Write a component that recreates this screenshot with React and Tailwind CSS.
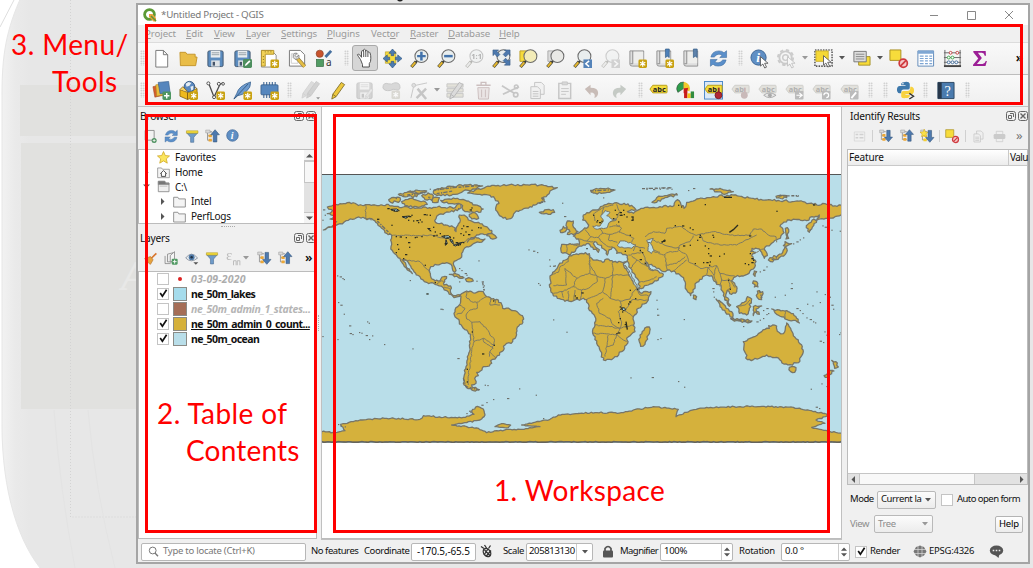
import React from "react";

/* ---------- shared icon parts ---------- */
const Star = ({ x = 11, y = 11 }) => (
  <g transform={`translate(${x} ${y})`}>
    <rect width="9" height="9" rx="1.5" fill="#c9a211" />
    <path d="M4.5 1.4v6.2M1.8 2.900l5.400 3.200M7.200 2.900 1.800 6.100" stroke="#fff" strokeWidth="1.3" />
  </g>
);
const Lens = ({ fill = "#e9eeee", s = "#6b6b6b", h = "#e8b92f" }) => (
  <g>
    <path d="M1.5 19 6.5 13.2" stroke="#4a4a3a" strokeWidth="3.4" />
    <path d="M1.8 18.6 5.6 14.2" stroke={h} strokeWidth="2" />
    <path d="m6.5 13.5 2-2.3" stroke="#333" strokeWidth="2" />
    <circle cx="12" cy="7.5" r="6.8" fill={fill} stroke={s} strokeWidth="1.1" />
  </g>
);
const Arrow = ({ x = 10, y = 7 }) => (
  <path transform={`translate(${x} ${y})`} d="M0 0v10l2.5-2.2 2 4.2 1.9-.9-2-4.1H8Z" fill="#fff" stroke="#555" strokeWidth=".9" />
);
const Floppy = () => (
  <g>
    <rect x="2" y="2" width="16" height="16.5" rx="1.5" fill="#5b8cbf" stroke="#41566e" />
    <path d="M5 2h10v7H5z" fill="#e9edf0" />
    <path d="M6 4h8M6 6h8" stroke="#8c979f" strokeWidth=".9" />
    <path d="M5.5 12h9v6.5h-9z" fill="#dfe3e6" />
    <path d="M7 13.5h2.5v4H7z" fill="#46556a" />
  </g>
);
const Tag = ({ t = "abc", fill = "#f5dd3c", s = "#b79d17", c = "#222" }) => (
  <g>
    <path d="M1 8.5 4 4.5h14.2q.8 0 .8.8v6.4q0 .8-.8.8H4Z" fill={fill} stroke={s} />
    <text x={t === "ab" ? 4 : 4} y="11.2" fontSize="7.8" fontWeight="700" fontFamily="Noto Sans, sans-serif" fill={c}>{t}</text>
  </g>
);
const GreyTag = ({ children, t }) => (
  <g><Tag t={t} fill="#e2e1dc" s="#cfcfca" c="#b0b0b0" />{children}</g>
);
const Book = () => (
  <g>
    <path d="M2 2h14.5v16H4.5Q2 18 2 16Z" fill="#dedede" stroke="#909090" />
    <path d="M5 2v13.5H2.5" fill="none" stroke="#8b8b8b" />
    <path d="M6 3h10v12H6z" fill="#eeeeec" />
  </g>
);
const TreeArrow = ({ up, star }) => (
  <g>
    <path d="M3.500 3v13M4 4h6M4 9.500h5M4 15.500h6" stroke="#9b9b9b" strokeWidth="1.400" fill="none" />
    <path d="M1 1.500h6v4H1z" fill="#d9d9d9" stroke="#999" strokeWidth=".7" />
    <path d="M5 7.500h4.500v4H5zM5 13.500h4.500v4H5z" fill={star ? "#f5cf2e" : "#eda836"} />
    {star && <path d="M6 0 7.500 4 12 4.500 8.500 7l1 4.500L6 9l-4 2 1-4L0 4.500 4.500 4Z" fill="#fae04b" stroke="#c79e15" strokeWidth=".6" />}
    {up
      ? <path d="M14 1 20 8H16.500V18H11.500V8H8Z" fill="#4d79ae" stroke="#345479" strokeWidth=".8" />
      : <path d="M14 19 20 12H16.500V2H11.500V12H8Z" fill="#4d79ae" stroke="#345479" strokeWidth=".8" />}
  </g>
);
const Refresh = () => (
  <g fill="#5a8fca" stroke="#3e6c9f" strokeWidth=".6">
    <path d="M2 8.500Q3.500 2 10.500 2q3.500 0 5.300 2L18.500 1.800V9h-7.200l2.500-2.300Q9.500 3.500 5.500 8.500Z" />
    <path d="M18 11.500Q16.500 18 9.500 18q-3.500 0-5.300-2l-2.700 2.200V11h7.200l-2.500 2.300Q10.500 16.500 14.500 11.500Z" />
  </g>
);
const Funnel = () => (
  <g>
    <path d="M2.500 5.500h15l-5.300 6v7H7.800v-7Z" fill="#6f9bc9" stroke="#46698f" strokeWidth=".8" />
    <path d="M2 2.500h16v3.300H2z" fill="#f3dc3c" stroke="#b29922" strokeWidth=".8" />
  </g>
);
const Info = () => (
  <g>
    <circle cx="9" cy="9" r="8" fill="#5f8fc4" stroke="#3c6596" />
    <text x="6.600" y="14" fontSize="14" fontStyle="italic" fontWeight="700" fontFamily="Liberation Serif, serif" fill="#fff">i</text>
  </g>
);
const Ban = () => (
  <g><circle cx="15" cy="15" r="4.300" fill="#f6caca" stroke="#cf3a3f" strokeWidth="1.800" /><path d="m12 18 6-6" stroke="#cf3a3f" strokeWidth="1.800" /></g>
);
const Pencil = ({ fill = "#edc83d", s = "#7b6b28" }) => (
  <path d="M4 19 5 14 14 1.500l3.500 2.300L8.500 16.500ZM5 14l3.500 2.500" fill={fill} stroke={s} strokeWidth=".9" />
);

const ICONS = {
  newfile: <path d="M4 1.500h8l4.500 4.500v13H4ZM12 1.500V6h4.500" fill="#fff" stroke="#777" />,
  open: <path d="M1 3.500h6l1.500 2H17v3h2l-1.500 9H1.500Z" fill="#e9bd48" stroke="#c4962c" />,
  save: <Floppy />,
  saveas: <g><Floppy /><rect x="10.500" y="10.500" width="9.500" height="9.500" rx="1.500" fill="#4c8e5d" /><path d="m12.500 18 .6-2.200 4-4 1.300 1.400-4 4Z" fill="#fff" /></g>,
  layout: <g><path d="M1.500 1.500h10.500l5 5V19H1.500Z" fill="#fff" stroke="#888" /><path d="M1.500 1.500h13v4h-9V18h-4Z" fill="#f2d256" stroke="#b3922a" /><path d="M5 3h1M8 3h1M11 3h1M3 8h1M3 11h1M3 14h1" stroke="#7b641b" /><Star /></g>,
  layoutmgr: <g><path d="M1.500 1.500h11.500l4.500 4.500V18h-16Z" fill="#fff" stroke="#777" /><path d="M3.500 5h7v10h-7z" fill="none" stroke="#ccc" /><path d="m9 9 8.500 9.500" stroke="#8c7434" strokeWidth="4" /><path d="m9 9 8.500 9.500" stroke="#e4bd45" strokeWidth="2.800" /><path d="M5.500 6q1-2.500 4-1.500L7.500 7 9 8.500l2.500-2q1 3-1.500 4Q7 12 5.500 9Z" fill="#dcdcdc" stroke="#777" strokeWidth=".8" /></g>,
  style: <g><circle cx="5" cy="5" r="3.800" fill="#c8532c" stroke="#8a4026" strokeWidth=".7" /><path d="M11 8.500 17 2" stroke="#456f9e" strokeWidth="3" /><rect x="1.500" y="11" width="7.500" height="7.500" fill="#519b63" stroke="#366c44" strokeWidth=".7" /><text x="11.500" y="18" fontSize="10.500" fontFamily="Noto Sans, sans-serif" fill="#333">a</text></g>,
  hand: <path d="M5.500 11.500 3.300 8.300Q1.600 6.500 3.200 6q1.300 0 3.300 3.300V3.500q.2-2 2 0V2q.9-2 2.100 0v1.200q1.200-1.700 2.200.2v1q1.300-1.400 2.200.4 1 3 .8 5.600Q16 14 14.300 15.500V19H7.500v-2.500ZM8.700 3.500V9M10.800 3V9M12.900 4.500V9" fill="#fff" stroke="#444" strokeWidth=".9" />,
  panmap: <g><path d="M2.500 3h11v12h-11z" fill="#f6dc3d" stroke="#b79d25" strokeWidth=".7" /><path d="m10 0 3.800 4.500h-2.400V7H8.600V4.500H6.200ZM10 20l3.800-4.500h-2.400V13H8.600v2.500H6.200ZM0 10l4.500-3.800v2.400H7v2.800H4.500v2.400ZM20 10l-4.500-3.800v2.400H13v2.800h2.500v2.400Z" fill="#4b7cb3" stroke="#345880" strokeWidth=".7" /></g>,
  zoomin: <g><Lens /><path d="M12 3v9M7.500 7.500h9" stroke="#4373ab" strokeWidth="2.600" /></g>,
  zoomout: <g><Lens /><path d="M7.500 7.500h9" stroke="#4373ab" strokeWidth="2.600" /></g>,
  zoom11: <g opacity=".35"><Lens h="#ddd" /><text x="6.500" y="10.500" fontSize="8" fontWeight="700" fontFamily="Noto Sans, sans-serif" fill="#333">1:1</text></g>,
  zoomfull: <g><Lens /><path d="M1 1h6L5.300 2.700l3 3-2.600 2.600-3-3L1 7ZM19 1v6l-1.700-1.700-3 3-2.600-2.600 3-3L13 1ZM19 17h-6l1.700-1.700-3-3 2.600-2.600 3 3L19 11Z" fill="#4d79ae" stroke="#37597f" strokeWidth=".6" /></g>,
  zoomsel: <g><path d="M1 2h9v11H1z" fill="#f7dc3b" stroke="#bca02b" /><Lens fill="#f3ecb8" /></g>,
  zoomlayer: <g><path d="M2 2h9v11H2z" fill="#ddd" stroke="#aaa" /><Lens fill="#e9e9e6" /></g>,
  zoomlast: <g><Lens /><rect x="11" y="11" width="9" height="9" fill="#5483b9" /><path d="m17 12.500-3.500 3 3.500 3" fill="none" stroke="#fff" strokeWidth="1.600" /></g>,
  zoomnext: <g opacity=".3"><Lens h="#ddd" /><rect x="11" y="11" width="9" height="9" fill="#888" /><path d="m14 12.500 3.500 3-3.500 3" fill="none" stroke="#fff" strokeWidth="1.600" /></g>,
  book: <g><Book /><Star /></g>,
  bookmark: <g><Book /><path d="M11 0h4v9l-2-1.500L11 9Z" fill="#4d80b8" stroke="#315a87" strokeWidth=".7" /><Star /></g>,
  bookshow: <g><Book /><path d="M12 0h4v9l-2-1.500L12 9Z" fill="#5e82aa" stroke="#315a87" strokeWidth=".7" /></g>,
  refresh: <Refresh />,
  identify: <g><Info /><Arrow x={11} y={8} /></g>,
  gear: <g opacity=".32"><circle cx="9" cy="9" r="6.500" fill="none" stroke="#777" strokeWidth="2" /><circle cx="9" cy="9" r="8" fill="none" stroke="#777" strokeWidth="2" strokeDasharray="3.500 2.800" /><circle cx="9" cy="9" r="3" fill="none" stroke="#777" strokeWidth="1.500" /><Arrow x={11} y={8} /></g>,
  select: <g><path d="M1 1h18v17H1z" fill="none" stroke="#222" strokeWidth="1.200" strokeDasharray="1.600 1.200" /><path d="M2 2h13v11H2z" fill="#f5d836" stroke="#c2a51f" strokeWidth=".8" /><Arrow x={10} y={7} /></g>,
  selectval: <g><path d="M7 8h12v9H7z" fill="#f7db37" stroke="#a5912d" /><path d="M2 2.500h13v11H2z" fill="#ddd" stroke="#777" /><path d="M4 5.500h9M4 8h9M4 10.500h9" stroke="#888" /></g>,
  deselect: <g><path d="M1 1h11.500v11H1z" fill="#f7dc3b" stroke="#a98f24" /><Ban /></g>,
  table: <g><path d="M2 2h16.500v16H2z" fill="#fff" stroke="#5e88b7" /><path d="M2 2h16.500v3H2z" fill="#7fa7d3" /><path d="M4 7.500h4M9.500 7.500h3M14 7.500h3M4 10h4M9.500 10h3M14 10h3M4 12.500h4M9.500 12.500h3M14 12.500h3M4 15.500h4M9.500 15.500h3M14 15.500h3" stroke="#7ca5d4" strokeWidth="1.300" /></g>,
  abacus: <g><path d="M2 1v17M18 1v17M1 4h18M1 9h18M1 14h18" stroke="#666" fill="none" /><path d="M1 18h18" stroke="#444" strokeWidth="2" /><g stroke="#c64343" fill="#fff"><circle cx="8" cy="4" r="1.500" /><circle cx="15" cy="4" r="1.500" /></g><g stroke="#3fa44b" fill="#fff"><circle cx="6" cy="9" r="1.500" /><circle cx="10" cy="9" r="1.500" /></g><g stroke="#47719f" fill="#fff"><circle cx="6" cy="14" r="1.500" /><circle cx="10" cy="14" r="1.500" /><circle cx="14" cy="14" r="1.500" /></g></g>,
  sigma: <path d="M3.500 2h13l.3 5h-1.300q-.6-3-3-3H8.300l4.200 5.500-5.200 6.300h5.900q2.300 0 3.400-3.300h1.200L16.300 18H3.200v-1.300l5.500-6.700-5.200-6.700Z" fill="#9c1f96" />,
  datasrc: <g><path d="m1 6 8-2 3 11-9 2Z" fill="#d55f2c" stroke="#a04522" strokeWidth=".6" /><path d="m4 4 8-1 2 11-9 2Z" fill="#e9bd3d" stroke="#ad8424" strokeWidth=".6" /><path d="m6.500 1.500 11-1L19 12 8.500 13.500Z" fill="#5686bd" stroke="#38608f" strokeWidth=".7" /><rect x="11" y="11" width="9" height="9" rx="1.500" fill="#4d9660" /><path d="M15.500 12.700v5.600M12.700 15.500h5.600" stroke="#fff" strokeWidth="1.500" /></g>,
  geopkg: <g><path d="m1 9 8 3 10-4v7L9 19.500 1 16Z" fill="#eeb91c" stroke="#7d5d10" strokeWidth=".8" /><path d="M9 12v7.500" stroke="#7d5d10" /><circle cx="11" cy="6" r="5.600" fill="#5a88be" stroke="#345783" /><path d="m7 3 3-2 3 1-2 3-3 1ZM12 6l3-1v4l-2 1Z" fill="#e6edf3" /><path d="m1 9 3-3 5 5M19 8l-3-2" stroke="#7d5d10" fill="#f6d466" strokeWidth=".8" /><Star /></g>,
  vector: <g fill="none" stroke="#4c4c4c"><path d="M3 3 8.500 17 14 5q2-3.500 4-2.500" strokeWidth="1.400" /><g fill="#fff"><circle cx="2.500" cy="2.500" r="1.600" /><circle cx="8.500" cy="17" r="1.600" /><circle cx="13.500" cy="3" r="1.600" /><circle cx="18" cy="3" r="1.400" /></g><g stroke="none"><Star /></g></g>,
  feather: <g><path d="M1 19 4 13Q6 5 18.500 1 19 7 14 11l-4 3-5 1.500Z" fill="#6d9bcf" stroke="#365f8c" strokeWidth=".8" /><path d="M1 19 16 3" stroke="#31577e" strokeWidth=".9" /><Star /></g>,
  chip: <g><path d="M4 1v17M7 1v17M10 1v17M13 1v17M16 1v17" stroke="#54779f" strokeWidth="1.300" /><rect x="1" y="4" width="18" height="10.500" rx="1" fill="#5687be" stroke="#345985" strokeWidth=".8" /><Star /></g>,
  pencils: <g opacity=".6"><g transform="translate(-3 -1)"><Pencil fill="#ccc" s="#bbb" /></g><g transform="translate(2 -1)"><Pencil fill="#bbb" s="#aaa" /></g><path d="M16 17h4l-2 2.500Z" fill="#555" /></g>,
  pencil: <Pencil />,
  saveedit: <g opacity=".28" style={{ filter: "grayscale(1)" }}><Floppy /><g transform="translate(8 7) scale(.62)"><Pencil /></g></g>,
  addpoly: <g opacity=".6"><path d="M1 7Q1 1 7 3q3 1 6-1 6-1 6 5-1 4-5 2-2-1-5 1-7 1-8-3Z" fill="#c5c5c5" stroke="#aaa" /><rect x="10" y="10" width="9" height="9" rx="1.500" fill="#c9c7be" /><path d="M14.500 11.600v5.800M12 13l5 3M17 13l-5 3" stroke="#fff" strokeWidth="1.200" /></g>,
  vertex: <g opacity=".5" stroke="#999" fill="none"><path d="M2 18 5 5l14-3" /><circle cx="5" cy="4.500" r="2" fill="#ccc" /><path d="m9 8 9 11M18 8 8 18" strokeWidth="2.600" /></g>,
  multiedit: <g opacity=".6"><path d="M1 3h17v3.500H1zM1 8h17v3.500H1zM1 13h17v4H1z" fill="#d8d6c8" stroke="#aaa" /><Pencil fill="#ccc" s="#888" /></g>,
  trash: <g opacity=".5" stroke="#a38989" fill="#e2d7d7"><path d="M2.500 4.500h15M7.500 4.500v-3h5v3" fill="none" strokeWidth="1.400" /><path d="M4 7h12l-.8 12H4.800Z" /><path d="M8 9v8M12 9v8" /></g>,
  cut: <g opacity=".5" stroke="#999" fill="none" strokeWidth="1.800"><path d="M1 5 14 13M2 14 19 6" /><circle cx="15.500" cy="14.500" r="2.300" /><circle cx="16" cy="6" r="1.800" /></g>,
  copy: <g opacity=".45" stroke="#888" fill="#eee"><path d="M7 1.500h7l3 3V14H7z" /><path d="M3 6h7l3 3v9.500H3z" /><path d="M5 11h6M5 13.500h6M5 16h6" /></g>,
  paste: <g opacity=".5" stroke="#999" fill="#eee"><path d="M4 2.500h12.500v16H4z" strokeWidth="1.500" /><path d="M7.500 1h5.500v3H7.500z" fill="#bbb" /><path d="M6.500 8h8M6.500 11h8M6.500 14h5" /></g>,
  undo: <path d="M3 8.500 9 4V7q8 0 8 5.500 0 3.500-4 5.500 2-6-4-6v3Z" fill="#c8bcb7" />,
  redo: <path d="M17 8.500 11 4V7q-8 0-8 5.500 0 3.500 4 5.500-2-6 4-6v3Z" fill="#c5cac5" />,
  label: <Tag />,
  diagram: <g><path d="M8 8V1a7 7 0 0 1 6 10Z" fill="#f0c92b" /><path d="M8 8 2 12A7 7 0 0 1 8 1Z" fill="#2d9d4b" stroke="#333" strokeWidth=".5" /><path d="M8 1.500Q13 2 13.500 7L8 8.500Z" fill="#f0c92b" /><path d="m8 8 5-1-2 5-3 1Z" fill="#d42121" /><path d="M8.500 8H12v10H8.500z" fill="#c71b1b" /><path d="M12 13h3.500v5H12z" fill="#f2c41d" /><path d="M15.500 11H19v7h-3.500z" fill="#318c3f" /></g>,
  pinlabel: <g><rect x=".5" y=".5" width="19" height="18.500" fill="#dce9f6" stroke="#4b87c9" /><Tag t="ab" /><path d="M15.500 7v6" stroke="#8b3030" strokeWidth="2" /><circle cx="15.200" cy="15" r="3.600" fill="#b22834" stroke="#7a1e27" /></g>,
  g1: <GreyTag t="ab"><path d="M14.500 7v6" stroke="#c9b5b5" strokeWidth="2" /><circle cx="14" cy="15" r="3.600" fill="#c9b9b9" /></GreyTag>,
  g2: <GreyTag t="abc"><path d="M6 15q6-5 13 0-7 5-13 0Z" fill="#e6e6e6" stroke="#aaa" /><circle cx="12.500" cy="15" r="2" fill="#aaa" /></GreyTag>,
  g3: <GreyTag t="abc"><rect x="10.500" y="10.500" width="9" height="9" rx="1" fill="#bbb" /><path d="M12 15h5M15 12.500l3 2.500-3 2.500" stroke="#fff" fill="none" strokeWidth="1.300" /></GreyTag>,
  g4: <GreyTag t="abc"><rect x="10.500" y="10.500" width="9" height="9" rx="1" fill="#bbb" /><path d="M12.500 15a2.500 2.500 0 1 1 2.500 2.500" stroke="#fff" fill="none" strokeWidth="1.300" /></GreyTag>,
  g5: <GreyTag t="abc"><rect x="10.500" y="10.500" width="9" height="9" rx="1" fill="#bbb" /><path d="m12 18 5-6" stroke="#fff" strokeWidth="2" /></GreyTag>,
  python: <g><path d="M9.500 1q4.500-.5 5 2v4q0 2-2.200 2H8q-2.500 0-2.500 2.500V13H3.500Q1 12.500 1 9q0-3.500 3-3.800h6V4.400H5.500V3Q6 1 9.500 1Z" fill="#3d78ab" /><path d="M10 18q-4.500.5-4.500-2v-3.500q0-2 2.500-2h4.500q2.500 0 2.500-2.500V6h1.500q2.500.5 2.500 4T16.300 14h-6.300v.8h4.500V16q-.5 2-4.500 2Z" fill="#f8d23f" /><circle cx="7.300" cy="3" r=".8" fill="#fff" /><path d="m14 13 4.500 3-4.500 3" stroke="#333" fill="none" strokeWidth="1.400" /></g>,
  help: <g><path d="M2 1.500h17v17H2z" fill="#4a7bae" stroke="#2e4964" /><path d="M2 1.500h4v17H2z" fill="#27384b" /><text x="9" y="15.500" fontSize="15" fontFamily="Liberation Serif, serif" fill="#fff">?</text></g>,
  addsel: <g><path d="M3 2h12.500v13.500H3z" fill="#f2f2f2" stroke="#888" strokeWidth="1.200" /><circle cx="15.500" cy="16" r="3.500" fill="#4e9160" /><path d="M15.500 14v4M13.500 16h4" stroke="#fff" /></g>,
  funnel: <Funnel />,
  info: <Info />,
  up: <TreeArrow up />,
  down: <TreeArrow />,
  stardown: <TreeArrow star />,
  brush: <g><path d="m19 2-8 8" stroke="#d8762e" strokeWidth="2.600" /><path d="m1 10 9-3 4 5-4 7q-3-1-4-4-2 0-5-5Z" fill="#e6a33d" stroke="#b7722c" /></g>,
  addgroup: <g><path d="M1.500 7v11h8M5 4.500v11h8V2.500L5 4.500Z" fill="#eee" stroke="#777" /><path d="M9 6.500 15 1v12l-6 3Z" fill="#f5f5f5" stroke="#777" /><rect x="11" y="11" width="8.500" height="8.500" rx="1.500" fill="#4f9962" /><path d="M15.200 12.500v5.500M12.500 15.200H18" stroke="#fff" strokeWidth="1.300" /></g>,
  eye: <g><path d="M1 10Q9-1 18 10 9 18 1 10Z" fill="#e8edf1" stroke="#8993a0" strokeWidth="1.300" /><circle cx="9.500" cy="9" r="4.200" fill="#4f79a6" /><circle cx="9.500" cy="9" r="1.700" fill="#1f3145" /><path d="M12 16h7l-3.500 3.500Z" fill="#555" /></g>,
  eps: <g opacity=".5"><text x="0" y="12" fontSize="20" fontFamily="Liberation Serif, serif" fill="#888">ε</text><path d="M10 19v-6h3.500v6M15 19v-6h3.500v6" fill="none" stroke="#888" strokeWidth="1.300" /></g>,
  form: <g opacity=".25" stroke="#777" fill="none"><path d="M2 3h16v14H2z" /><path d="M4 7h4M10 7h6M4 12h4M10 12h6" strokeWidth="2.500" /></g>,
  printer: <g opacity=".35"><path d="M5 2h10v5H5zM5 12h10v6H5z" fill="#eee" stroke="#777" /><rect x="1" y="6" width="18" height="8" rx="2" fill="#888" /></g>,
  favstar: <path d="m10 .8 2.700 6.200 6.600.6-5 4.500 1.500 6.600L10 15.200 4.200 18.700 5.700 12.100l-5-4.500 6.600-.6Z" fill="#fbe55c" stroke="#cfa827" strokeWidth="1.200" />,
  home: <g fill="#fff" stroke="#777"><path d="M1 3h6l1.500 2H19v13H1Z" fill="#f4f4f4" /><path d="M5.500 11.500 10 7l4.500 4.500h-1.300V16H6.800v-4.500Z" stroke="#333" strokeWidth="1.300" /></g>,
  drive: <g stroke="#888"><path d="M2 2h10l2 2.500h4.500V18H2Z" fill="#f0f0f0" strokeWidth="1.300" /><path d="M2 2h10l1.500 3h5v2H2Z" fill="#777" /><path d="M4 9.500h12" stroke="#aaa" /></g>,
  folder: <path d="M1 3.500h6.500l1.500 2.500H19v12.500H1Z" fill="#f4f4f4" stroke="#8b8b8b" strokeWidth="1.400" />,
};

const Icon = ({ n, size = 20 }) => (
  <svg width={size} height={size} viewBox="0 0 20 20" fill="none" className="shrink-0 overflow-visible">{ICONS[n]}</svg>
);
const Handle = ({ className = "" }) => (
  <div className={"flex shrink-0 justify-center " + className}>
    <div className="h-4 w-[5px] bg-[radial-gradient(circle,#bdbdbd_0.7px,transparent_0.9px)] bg-[length:2.5px_2.5px]" />
  </div>
);
const Caret = ({ className = "", light }) => (
  <div className={"flex shrink-0 justify-center " + className}>
    <svg width="6" height="4" viewBox="0 0 6 4"><path d="M0 0h6L3 3.600Z" fill={light ? "#999" : "#555"} /></svg>
  </div>
);
const Slots = ({ names }) => names.map((n) => (
  <div key={n} className="flex w-[27.2px] shrink-0 justify-center">
    {n === "hand"
      ? <div className="flex h-[26px] w-[26px] shrink-0 items-center justify-center rounded-[3px] border border-[#a9a9a9] bg-[#d6d6d6]"><Icon n={n} /></div>
      : <Icon n={n} size={19} />}
  </div>
));

/* ---------- world map ---------- */
let seed = 11;
const rnd = () => ((seed = (seed * 16807) % 2147483647) / 2147483647);
function coast(str, amp = 3, close = true) {
  const v = str.trim().split(/[\s,]+/).map(Number);
  const p = [];
  for (let i = 0; i < v.length; i += 2) p.push([v[i], v[i + 1]]);
  if (close) p.push(p[0]);
  let d = `M${p[0][0]} ${p[0][1]}`;
  for (let i = 1; i < p.length; i++) {
    const [a, b] = p[i - 1], [c, e] = p[i];
    const len = Math.hypot(c - a, e - b);
    const n = Math.max(1, Math.round(len / 6));
    for (let k = 1; k < n; k++) {
      const o = (rnd() - 0.5) * 2 * amp;
      const t = k / n;
      d += `L${(a + (c - a) * t - ((e - b) / len) * o).toFixed(1)} ${(b + (e - b) * t + ((c - a) / len) * o).toFixed(1)}`;
    }
    d += `L${c} ${e}`;
  }
  return close ? d + "Z" : d;
}
const LAND = [
  "22 126 40 120 60 116 82 113 110 118 137 119 165 120 195 122 205 118 228 124 250 126 285 130 310 126 335 130 352 126 375 128 390 125 400 130 412 118 422 116 424 127 412 137 395 137 380 141 370 148 350 154 344 167 352 175 378 180 400 186 408 200 413 182 421 166 418 150 432 150 445 165 458 170 475 172 490 182 515 196 514 205 500 208 470 210 450 222 442 231 465 215 480 222 495 222 478 232 462 235 440 245 430 255 425 265 425 276 408 287 400 295 406 310 404 322 398 315 393 298 380 293 362 297 345 298 332 305 328 320 333 338 345 348 360 347 366 336 380 335 374 350 372 360 392 363 391 375 395 388 408 392 418 389 420 394 402 398 385 381 370 368 345 358 320 352 300 335 282 320 268 298 255 284 246 284 258 300 270 318 277 326 262 315 250 298 240 280 232 275 220 262 213 245 212 225 215 210 200 205 185 190 172 175 160 165 135 160 110 158 85 166 60 176 35 186 10 195 40 181 50 170 30 162 42 155 22 146 38 137",
  "443 84 470 72 510 64 570 59 640 58 690 65 712 68 690 78 682 90 668 98 672 108 650 118 630 125 605 135 585 142 576 158 566 162 545 155 532 140 528 125 537 115 524 100 505 90 480 88",
  "340 80 365 68 400 64 440 60 488 63 470 70 430 78 405 88 375 92 345 88",
  "362 106 400 99 440 108 465 120 490 132 476 142 455 140 430 136 428 122 410 116 385 116",
  "245 110 270 100 310 108 322 118 295 127 255 122", "206 104 220 97 240 98 240 108 212 112",
  "235 88 260 82 300 86 290 95 250 95", "305 92 325 84 340 92 335 106 315 104", "340 98 358 98 354 112 338 112", "265 80 300 77 320 78 300 84", "448 148 466 144 476 160 456 162",
  "500 212 515 205 530 218 512 220", "658 142 680 134 700 134 704 142 685 148 665 146",
  "738 182 742 168 760 168 758 180 766 192 774 200 766 206 742 208 750 200 740 192", "720 196 730 184 740 188 736 200 722 203",
  "388 328 405 325 432 338 415 338", "436 342 452 340 460 348 440 349",
  "420 390 432 382 440 378 455 380 470 382 490 380 500 395 515 402 530 403 545 418 548 430 570 433 597 446 607 452 611 462 606 477 590 492 588 515 578 530 555 540 545 560 525 582 512 587 515 595 508 603 490 605 486 615 470 622 475 632 464 640 468 655 455 660 460 668 478 674 460 677 440 668 430 655 432 635 438 605 445 570 450 535 452 508 430 490 418 470 403 450 405 435 418 420 422 405",
  "748 272 736 285 716 300 698 322 690 340 693 355 689 366 698 385 712 400 735 409 765 405 785 402 800 404 805 416 805 430 808 436 825 455 825 480 818 505 830 535 845 570 850 585 880 580 905 560 923 535 920 520 945 500 943 475 940 455 955 430 985 405 993 380 960 383 950 370 930 335 910 297 920 290 880 291 860 282 848 292 815 280 808 266 780 266 765 268",
  "725 238 724 262 745 268 762 262 772 248 790 240 800 236 810 240 835 262 838 254 820 236 824 230 838 240 855 255 862 270 868 254 882 248 888 255 890 265 915 268 922 272 921 288 932 310 955 345 958 370 985 360 1015 345 1030 328 1012 316 992 315 975 292 1005 305 1025 318 1060 318 1080 330 1092 345 1100 375 1112 392 1125 370 1130 352 1160 330 1175 332 1190 358 1203 360 1210 392 1228 424 1232 420 1217 390 1222 376 1235 388 1250 380 1250 365 1234 348 1247 335 1270 333 1300 312 1308 290 1295 272 1308 262 1292 260 1296 250 1318 252 1325 262 1333 280 1342 272 1332 252 1352 238 1375 222 1392 203 1380 184 1402 165 1460 167 1476 155 1498 150 1490 166 1468 202 1459 182 1476 166 1500 162 1545 155 1570 150 1570 124 1520 118 1480 118 1430 108 1380 108 1340 105 1270 97 1240 90 1180 95 1130 102 1100 112 1092 130 1072 104 1062 122 1020 125 970 130 940 145 922 140 948 134 935 121 895 115 860 118 825 135 790 150 788 165 800 172 806 180 800 190 790 193 775 205 760 213 776 222 778 238 750 236",
  "1270 530 1290 520 1320 503 1335 493 1348 490 1346 482 1370 483 1372 499 1390 506 1396 490 1400 474 1412 490 1425 517 1447 545 1450 560 1436 593 1410 599 1386 594 1370 577 1340 570 1300 584 1282 584 1274 560", "1408 607 1428 608 1424 622 1412 620",
  "958 530 960 510 980 486 988 486 989 500 975 538 962 544",
  "1188 402 1202 410 1235 440 1238 457 1220 447 1200 425", "1232 460 1270 463 1296 468 1290 472 1238 465",
  "1250 425 1272 412 1282 395 1295 402 1288 430 1280 450 1258 445", "1300 425 1325 423 1308 432 1318 448 1308 440 1300 452",
  "1355 432 1372 434 1400 437 1420 446 1438 474 1420 466 1395 462 1392 456 1370 448", "1300 348 1310 350 1314 366 1303 366", "1312 378 1328 380 1325 404 1312 398", "1120 390 1130 395 1128 404 1120 400",
  "1345 285 1350 278 1375 270 1388 262 1395 246 1400 250 1396 268 1378 278 1352 290", "1390 242 1395 230 1415 236 1398 244", "1396 190 1402 188 1406 220 1398 222",
  "996 112 1010 98 1035 92 1070 86 1072 90 1035 98 1010 112", "812 76 835 72 870 72 885 75 850 84 820 84", "1170 72 1200 70 1240 80 1220 86 1190 80", "1368 94 1400 92 1400 98 1370 99",
  "1535 586 1552 594 1555 606 1544 610 1540 596", "1512 632 1532 616 1542 618 1522 637", "1303 318 1310 320 1305 334 1300 328",
];
const ANTARCTICA = coast("5 800 45 803 75 797 62 778 100 770 120 765 200 760 300 763 310 752 370 757 430 757 462 748 455 738 472 724 490 732 495 750 480 765 440 773 395 780 440 785 475 790 500 803 530 797 600 793 660 785 605 780 640 773 690 763 715 750 780 745 825 743 910 743 940 735 1000 725 1075 733 1068 755 1110 737 1160 727 1260 725 1350 725 1420 727 1480 740 1520 747 1522 753 1488 765 1515 775 1475 787 1530 800 1570 805 1570 831 0 831", 2);
const SEAS = [
  "842 153 856 136 870 142 860 152 874 162 890 164 868 172 862 188 826 192 818 184 840 183 850 168",
  "892 240 900 228 920 230 948 240 936 250 900 247", "980 226 1000 220 992 236 1003 256 994 266 983 258 986 242", "914 300 920 306 950 360 958 374 946 362",
];
const BORDERS = [
  "137 119 137 160 158 164", "215 212 345 211 360 218 385 220 400 238 430 232 448 220", "246 284 275 288 300 290 318 310 330 320", "350 357 366 347 374 352", "372 366 390 372",
  "440 380 438 395 455 410 470 412 472 430 450 435 438 450 440 462 455 472 480 470 500 492 510 510 522 520 522 540 510 560 508 575", "470 412 490 400 500 395", "512 402 510 420 540 420", "526 404 525 416", "418 420 435 430 425 445 410 448", "455 472 458 500 462 530 455 560 450 600 444 640 445 660", "462 530 490 520 522 540", "490 520 492 532 520 550", "508 560 528 578",
  "748 272 745 290 720 305 715 322 695 330", "735 310 770 340 808 325 832 334 832 350", "735 310 740 360 700 362", "770 340 760 365 740 375 700 385", "760 365 785 375 800 372 832 350", "808 266 810 325", "810 285 808 300 832 334", "878 290 878 330 928 330", "832 334 856 340 878 330", "856 340 848 380 820 395 800 404", "785 375 782 402", "765 375 762 405", "745 378 745 407", "725 380 730 398", "848 380 870 400 900 408 930 402 940 380 950 370", "878 330 876 360 870 400", "900 408 905 430 940 455", "850 400 830 415 838 445 870 460 880 480 900 490 905 470 895 440 905 430", "825 480 870 485 900 490 940 480", "818 505 890 508 880 540 860 545 855 575", "890 508 910 525 920 530", "865 510 860 545", "915 440 935 405 985 405", "900 490 890 508", "950 372 960 390 985 392",
  "778 222 800 228 812 215 800 200 795 193", "812 215 835 218 848 205 838 190", "848 205 870 208 895 200 918 210 942 220 935 232", "835 218 850 235 865 245 882 248", "800 228 820 230", "870 208 865 225 892 232", "740 238 740 262", "756 237 780 243", "825 168 820 148 850 128 880 120", "845 150 850 125", "890 118 900 140 890 160 872 172", "888 178 905 190 898 202", "868 186 900 182",
  "975 215 1000 200 1035 205 1040 190 1085 185 1105 200 1125 210 1140 208", "1140 208 1180 200 1220 208 1260 212 1290 210 1300 192 1325 192 1345 210 1368 215 1370 232", "1140 208 1150 228 1200 240 1250 240 1290 220 1310 210", "1120 212 1110 230 1080 240 1075 255 1100 270 1105 290 1140 310 1165 308 1190 302 1200 325 1230 332 1247 335", "1000 225 1020 235 1050 245 1080 250", "1000 258 1030 270 1045 262 1075 258", "1003 256 1020 262", "1035 270 1038 300 1045 318", "1038 300 1070 295 1095 275", "1060 318 1075 305 1100 285", "925 270 965 262 980 290 975 292", "940 258 945 245 975 250", "932 310 950 285 935 272", "950 285 975 300 1000 315", "958 352 990 345 1010 335", "965 262 960 250", "1165 308 1160 328", "1165 308 1182 330", "1190 302 1182 330 1190 358", "1200 325 1205 345 1200 365", "1205 345 1225 345 1232 370 1222 376", "1225 340 1245 368", "1310 262 1330 252", "1395 437 1395 462", "1250 425 1275 420 1290 405",
];
const ISLES = "10 134 15 150 8 165 52 332 60 335 68 340 72 343 270 346 362 432 368 433 476 287 626 254 640 258 652 262 688 284 690 303 700 303 655 355 660 360 705 302 733 154 727 114 418 310 425 316 435 325 440 330 418 350 470 348 486 350 492 362 492 374 55 412 62 420 72 447 142 470 147 474 90 505 98 508 118 502 125 504 138 511 157 512 148 523 53 523 88 482 8 514 193 538 278 551 413 580 495 660 503 661 598 671 562 700 648 690 520 703 500 712 485 720 700 464 740 501 670 760 985 232 1010 405 1012 432 1092 463 1012 450 1013 523 1022 520 932 638 996 637 1075 649 1093 666 1415 355 1413 370 1395 390 1365 396 1320 320 1330 315 1340 305 1270 484 1473 672 1488 726 1498 730 1505 656 1520 664 1500 528 1510 532 1514 500 1520 510 1430 430 1440 436 1448 445 1460 458 1470 463 1480 470 1486 473 1508 182 1515 186 1535 195 1560 198 1380 90 1430 93 1470 195 1450 218 1440 224 1430 230 1420 236 980 72 990 70 1000 73 1010 70 1020 72 1030 69 1040 71 1050 68 1055 72 1105 76 1120 70 850 98 1180 380 1182 396 1178 370 1490 380 1515 388 1530 396 1535 420 1540 432 1200 410 1215 405 1340 430 1345 445 1330 436 1340 448 1310 470 1320 465 1330 460 415 130 325 96 330 72 228 100 250 90 40 783 55 778 62 782 75 785 448 738 440 745 452 742 1558 508 1562 503 1462 417 1478 422 1500 412".split(" ").map(Number);
const LAKES = "203 130 215 134 222 136 230 138 172 162 215 180 250 156 258 155 268 154 275 150 265 165 280 167 290 166 300 164 305 170 295 172 312 148 320 149 330 150 340 186 325 190 330 196 345 200 350 210 340 212 290 216 305 214 285 217 240 215 258 217 228 214 232 238 265 232 268 246 235 252 228 262 256 268 250 280 425 190 430 182 440 184 437 200 430 210 422 205 445 208 455 195 475 187 482 188 450 134 455 128 360 205 372 212 380 218 390 216 400 218 395 228 408 232 415 240 420 238 430 232 375 235 820 150 832 166 845 168 838 172 830 170 885 135 890 148 900 142 905 150 912 148 920 155 935 165 938 158 880 160 895 170 900 150 910 135 930 210 938 162 935 155 1075 120 1084 125 1155 118 1030 228 1025 230 1033 226 1140 210 1138 216 1132 225 1178 210 1180 216 1288 212 1110 188 1118 193 1065 181 1087 182 1155 242 1165 250 1165 265 1170 272 1212 266 1198 273 1150 292 1160 292 1170 290 1168 300 1125 295 1090 242 1110 240 960 256 967 262 960 283 975 295 915 258 1290 265 1295 280 1300 285 1275 295 1285 298 1295 292 1225 345 1230 372 930 375 928 410 925 416 946 400 952 372 785 383 800 250 902 432 907 440 915 478 918 484 900 460 890 505 895 503 895 472 522 540 456 500 487 566 441 612 441 650 520 407 320 386 345 352 315 300 765 392 768 398 900 425 905 428 1370 138 1480 119".split(" ").map(Number);
const dots = (a, w, h, c) => {
  const out = [];
  for (let i = 0; i < a.length; i += 2) out.push(<rect key={i} x={a[i] - 1} y={a[i + 1] - 1} width={w + (i % 8 === 0 ? 3 : 0)} height={h} fill={c} />);
  return out;
};
const LAND_PATHS = LAND.map((s) => coast(s, 3.4));
const SEA_PATHS = SEAS.map((s) => coast(s, 1.8));
const BORDER_PATHS = BORDERS.map((s) => coast(s, 1.8, false));
const ISLE_DOTS = dots(ISLES, 4, 3.4, "#6d6f6a");
const LAKE_DOTS = dots(LAKES, 4, 3.8, "#2c2d20");

const WorldMap = () => (
  <svg width="519" height="269" viewBox="6 27 1557 807" preserveAspectRatio="none" className="block">
    <rect x="0" y="27" width="1570" height="807" fill="#b9dee9" />
    <g fill="#d5b13c" stroke="#777568" strokeWidth="3.800" strokeLinejoin="round">
      {LAND_PATHS.map((d, i) => <path key={i} d={d} />)}
      <path d={ANTARCTICA} />
      <path d={coast("525 785 545 776 572 780 565 788", 1)} />
    </g>
    <g fill="#b9dee9" stroke="#777568" strokeWidth="3">{SEA_PATHS.map((d, i) => <path key={i} d={d} />)}</g>
    <g fill="none" stroke="#807b62" strokeWidth="3">{BORDER_PATHS.map((d, i) => <path key={i} d={d} />)}</g>
    <path d="M212 133l18-1 8 5-14 2ZM246 155l22-2-10 7ZM322 190l12 8M365 214l20-2 8 6-15 2ZM378 224l4 12-6 5ZM390 222l8 4 2 10-6-4ZM400 240l18-2-12 5ZM412 235l16-3-8 4ZM905 430l8-2 4 6-8 3Z" fill="#a6dbea" stroke="#30322a" strokeWidth="3" />
    <path d="M1228 202l12-8 14-14M918 470l4 24M1026 232l10-8M1212 97l24 0" stroke="#2c2d20" strokeWidth="4" fill="none" />
    {ISLE_DOTS}{LAKE_DOTS}
    <path d="M172 168l38 38M430 640l8 25 40 10M1355 284l20-8M1318 376l8 24M340 76l60-8 80-6M350 86l50-8M262 90l60-8M664 98l10 12-22 6M1232 462l62 9M488 352l4 24M966 71l90-3M812 78l70-4M1376 93l60-1" stroke="#6d6f6a" strokeWidth="4" strokeDasharray="9 4 4 3 13 5" fill="none" />
    <path d="M0 28.500H1570M0 831H1570" stroke="#555" strokeWidth="3" />
  </svg>
);

/* ---------- docks ---------- */
const DockTitle = ({ children }) => (
  <div className="flex h-[16px] items-center pl-[2px] pr-[2px] pt-[2px]">
    <span className="grow text-[10.200px] leading-[14px] tracking-[-0.25px]">{children}</span>
    <svg width="22" height="10" viewBox="0 0 22 10" fill="none" stroke="#666">
      <rect x=".5" y=".5" width="9" height="9" rx="2" /><path d="M4 2.500h3.500V6M2.500 4.500h3v3h-3z" />
      <rect x="12.500" y=".5" width="9" height="9" rx="2" /><path d="m14.500 2.500 5 5m0-5-5 5" strokeWidth="1.400" />
    </svg>
  </div>
);
const Tri = ({ d = "up" }) => (
  <svg width="7" height="7" viewBox="0 0 7 7" className="shrink-0">
    <path d={{ up: "M0 5.500h7L3.500 2Z", down: "M0 1.500h7L3.500 5Z", left: "M5 0v7L1.500 3.500Z", right: "M2 0v7l3.500-3.500Z" }[d]} fill="#555" />
  </svg>
);
const Check = ({ on }) => (
  <span className="flex h-[12px] w-[12px] shrink-0 items-center justify-center border border-[#c4c4c4] bg-white">
    {on && <svg width="9" height="9" viewBox="0 0 9 9"><path d="m1.200 4 2.200 3.300L7.600.8" fill="none" stroke="#111" strokeWidth="1.700" /></svg>}
  </span>
);
const layers = [
  ["03-09-2020", false, null, "italic text-[#adadad] tracking-[0.15px]"],
  ["ne_50m_lakes", true, "bg-[#a6dcec]", "tracking-[-0.6px]"],
  ["ne_50m_admin_1_states...", false, "bg-[#a56e57]", "italic text-[#b5b5b5] tracking-[-0.3px]"],
  ["ne_50m_admin_0_count...", true, "bg-[#d5b13c]", "underline tracking-[-0.52px]"],
  ["ne_50m_ocean", true, "bg-[#b9dee9]", "tracking-[-0.6px]"],
];

const LeftDock = () => (
  <div className="flex w-[180px] shrink-0 flex-col">
    <DockTitle>Browser</DockTitle>
    <div className="flex h-[26px] items-center gap-[6.400px] pl-[5px]">
      {["addsel", "refresh", "funnel", "up", "info"].map((n) => <Icon key={n} n={n} size={14.4} />)}
    </div>
    <div className="mr-[2px] flex h-[75px] border border-[#bcbcbc] bg-white text-[10px] leading-[14.8px] tracking-[-0.2px]">
      <div className="grow overflow-hidden">
        {[["favstar", "Favorites", 0], ["home", "Home", 1], ["drive", "C:\\", 2]].map(([n, t, k]) => (
          <div key={n} className="flex h-[14.8px] items-center">
            <span className="flex w-[18px] pl-[4px]">{k > 0 && <Tri d={k === 1 ? "right" : "down"} />}</span>
            <Icon n={n} size={13} /><span className="pl-[5px]">{t}</span>
          </div>
        ))}
        {["Intel", "PerfLogs"].map((t) => (
          <div key={t} className="flex h-[14.8px] items-center pl-[20px]">
            <span className="w-[14px]"><Tri d="right" /></span><Icon n="folder" size={13} /><span className="pl-[5px]">{t}</span>
          </div>
        ))}
      </div>
      <div className="flex w-[11px] flex-col items-center justify-between bg-[#e2e2e2]">
        <div className="flex h-[11px] w-full shrink-0 items-center justify-center border-b border-[#c5c5c5] bg-[#f4f4f4]"><Tri /></div>
        <div className="mb-auto h-[22px] w-full border border-[#c5c5c5] bg-[#f7f7f7]" />
        <div className="flex h-[11px] w-full shrink-0 items-center justify-center border-t border-[#c5c5c5] bg-[#f4f4f4]"><Tri d="down" /></div>
      </div>
    </div>
    <div className="flex h-[5px] items-center justify-center"><div className="w-[14px] border-t border-dotted border-[#aaa]" /></div>
    <DockTitle>Layers</DockTitle>
    <div className="flex h-[26px] items-center pl-[6px]">
      <Icon n="brush" size={13} /><span className="w-[7px]" /><Icon n="addgroup" size={14} /><span className="w-[7px]" /><Icon n="eye" size={14} />
      <span className="w-[6px]" /><Icon n="funnel" size={14} /><span className="w-[7px]" /><Icon n="eps" size={15} />
      <Caret light className="w-[10px]" /><span className="w-[6px]" /><Icon n="down" size={14} /><span className="w-[7px]" /><Icon n="up" size={14} />
      <span className="pb-[2px] pl-[13px] text-[13px] font-semibold leading-none">»</span>
    </div>
    <div className="mr-px grow border border-[#bcbcbc] bg-white text-[10.5px] font-bold">
      {layers.map(([t, on, sw, cls]) => (
        <div key={t} className="mt-[-0.8px] flex h-[15.7px] items-center pl-[18px]">
          <Check on={on} />
          <span className="flex w-[22px] justify-center">
            {sw ? <span className={"h-[14px] w-[14px] border border-[#8b8b86] " + sw} /> : <span className="h-[4px] w-[4px] rounded-full bg-[#dd2222]" />}
          </span>
          <span className={"whitespace-nowrap leading-[14px] " + cls}>{t}</span>
        </div>
      ))}
    </div>
  </div>
);

const Combo = ({ t, className, dim }) => (
  <div className={"flex shrink-0 items-center rounded-[2px] border border-[#b9b9b9] bg-gradient-to-b from-[#fcfcfc] to-[#ececec] pl-[3px] " + className}>
    <span className="w-[40px] whitespace-nowrap tracking-[-0.4px]">{t}</span><Caret light={dim} className="w-[14px]" />
  </div>
);
const RightDock = () => (
  <div className="flex w-[181px] shrink-0 flex-col text-[9.5px] tracking-[-0.15px]">
    <div className="-mr-[2px] pl-px"><DockTitle>Identify Results</DockTitle></div>
    <div className="flex h-[26px] items-center pl-[6px]">
      <Icon n="form" size={13} /><i className="mx-[6px] h-3 w-px bg-[#d0d0d0]" />
      <Icon n="down" size={13.5} /><span className="w-[7px]" /><Icon n="up" size={13.5} /><span className="w-[7px]" /><Icon n="stardown" size={14} />
      <i className="mx-[5px] h-3 w-px bg-[#d0d0d0]" /><Icon n="deselect" size={14} /><i className="mx-[6px] h-3 w-px bg-[#d0d0d0]" />
      <Icon n="copy" size={13} /><span className="w-[8px]" /><Icon n="printer" size={13} /><span className="pb-[2px] pl-[10px] text-[13px] leading-none text-[#777]">»</span>
    </div>
    <div className="flex h-[336px] shrink-0 flex-col border border-[#bcbcbc] bg-white">
      <div className="flex h-[16px] items-center border-b border-[#c9c9c9] bg-gradient-to-b from-white to-[#ececec] text-[10px]">
        <span className="w-[161px] shrink-0 border-r border-[#c9c9c9] pl-px">Feature</span><span className="pl-[1px] tracking-[-0.6px]">Valu</span>
      </div>
      <div className="grow" />
      <div className="flex h-[11px] items-center border-t border-[#c5c5c5] bg-[#e2e2e2]">
        <span className="flex w-[11px] justify-center"><Tri d="left" /></span>
        <span className="h-full w-[116px] border-x border-[#c5c5c5] bg-[#f8f8f8]" /><span className="grow" />
        <span className="flex w-[12px] justify-center"><Tri d="right" /></span>
      </div>
    </div>
    <div className="flex h-[28px] items-center pl-[3px] pt-[1px]">
      <span className="w-[27px] tracking-[-0.45px]">Mode</span><Combo t="Current la" className="h-[18px] w-[59px]" />
      <span className="ml-[5px] flex items-center gap-[4px]"><Check /><span className="whitespace-nowrap tracking-[-0.55px]">Auto open form</span></span>
    </div>
    <div className="flex h-[22px] items-center pl-[3px] text-[#8c8c8c]">
      <span className="w-[24px] tracking-[-0.45px]">View</span><Combo dim t="Tree" className="h-[18px] w-[59px]" />
      <span className="ml-auto mr-[5px] flex h-[17px] w-[28px] items-center justify-center rounded-[2px] border border-[#b4b4b4] bg-gradient-to-b from-white to-[#ececec] text-black">Help</span>
    </div>
  </div>
);

const Spin = () => (
  <span className="flex h-full w-[11px] flex-col items-center justify-center border-l border-[#ccc]">
    <svg width="6" height="10" viewBox="0 0 6 10"><path d="M0 3.800h6L3 .5ZM0 6.200h6L3 9.500Z" fill="#555" /></svg>
  </span>
);
const Field = ({ className, children }) => (
  <div className={"flex h-[18px] shrink-0 items-center rounded-[2px] border border-[#b7b7b7] bg-white " + className}>{children}</div>
);
const StatusBar = () => (
  <div className="flex h-[24px] shrink-0 items-center whitespace-nowrap pl-[3px] pt-px text-[9.5px] tracking-[-0.25px]">
    <Field className="w-[165px] pl-[6px] text-[#777]">
      <svg width="11" height="11" viewBox="0 0 11 11" fill="none" stroke="#777"><circle cx="4.700" cy="4.500" r="3.400" /><path d="M7 7l3 3.300" strokeWidth="1.300" /></svg>
      <span className="pl-[4px] tracking-[-0.25px]">Type to locate (Ctrl+K)</span>
    </Field>
    <span className="ml-[5px] w-[47px] shrink-0 tracking-[-0.45px]">No features</span>
    <span className="ml-[6px] w-[47px] shrink-0 tracking-[-0.4px]">Coordinate</span>
    <Field className="w-[65px] pl-[5px] text-[10px] tracking-[-0.15px]">-170.5,-65.5</Field>
    <svg width="15" height="15" viewBox="0 0 15 15" className="ml-[3px] shrink-0" fill="none" stroke="#333"><ellipse cx="8" cy="8.500" rx="3.300" ry="4.500" transform="rotate(-35 8 8.500)" strokeWidth="1.400" /><path d="m2 2.500 3 2M5.500 1l2 3M11.500 1.500l-2 3M5.500 6l6 6M9 5l-4 6M12 6.500l-5 6" strokeWidth="1.300" /></svg>
    <span className="ml-[9px] w-[23px] shrink-0 tracking-[-0.4px]">Scale</span>
    <Field className="w-[67px] pl-[2px]"><span className="w-[47px] tracking-[-0.35px]">205813130</span><span className="flex h-full grow items-center justify-center border-l border-[#ccc]"><Caret className="w-[8px]" /></span></Field>
    <svg width="12" height="13" viewBox="0 0 12 13" className="ml-[9px] shrink-0"><path d="M3 6V3.500q3-4 6 0V6" fill="none" stroke="#555" strokeWidth="1.700" /><rect x="1" y="5.500" width="10" height="7" rx="1" fill="#555" /></svg>
    <span className="ml-[6px] w-[40px] shrink-0 tracking-[-0.55px]">Magnifier</span>
    <Field className="w-[73px] pl-[3px]"><span className="grow">100%</span><Spin /></Field>
    <span className="ml-[6px] w-[42px] shrink-0">Rotation</span>
    <Field className="w-[69px] pl-[3px]"><span className="grow">0.0 °</span><Spin /></Field>
    <span className="ml-[5px] flex items-center gap-[3px]"><Check on /><span className="w-[43px] tracking-[-0.35px]">Render</span></span>
    <svg width="14" height="13" viewBox="0 0 14 13" fill="#777" className="shrink-0"><path d="M7 .5 11 2l2.500 4.500-2.500 4-4 2-4-2-2.500-4L3 2Z" /><path d="M1 4.500h12M1 8.500h12M5 1v11M9 1v11" stroke="#ddd" strokeWidth=".7" /></svg>
    <span className="ml-[2px] w-[60px] shrink-0">EPSG:4326</span>
    <svg width="15" height="13" viewBox="0 0 14 13" className="shrink-0"><ellipse cx="7" cy="5.500" rx="6.700" ry="5" fill="#555" /><path d="M5 9.500 9 13l1-4Z" fill="#555" /><path d="M3.200 5.500h1.600M6.200 5.500h1.600M9.200 5.500h1.600" stroke="#eee" strokeWidth="1.500" /></svg>
  </div>
);

const menus = [["P", "roject", ""], ["E", "dit", ""], ["V", "iew", ""], ["L", "ayer", ""], ["S", "ettings", ""], ["P", "lugins", ""], ["o", "r", "Vect"], ["R", "aster", ""], ["D", "atabase", ""], ["H", "elp", ""]];
const menuW = ["w-[41px]", "w-[28px]", "w-[32px]", "w-[35px]", "w-[46px]", "w-[44px]", "w-[39px]", "w-[38px]", "w-[51px]", "w-[30px]"];

export default function App() {
  return (
    <div className="relative h-[568px] w-[1033px] overflow-hidden bg-white font-['Noto_Sans','Open_Sans',sans-serif] text-[#111]">
      <svg width="1033" height="568" className="absolute inset-0" fill="none">
        <defs><linearGradient id="edge" gradientUnits="userSpaceOnUse" x1="0" y1="0" x2="30" y2="0"><stop offset="0" stopColor="#f3f3f3" /><stop offset=".5" stopColor="#eaeaea" /><stop offset="1" stopColor="#e7e7e7" /></linearGradient></defs>
        <path d="M22-5C6 30 2 55 2 95V425C2 490 18 545 46 575H1040V-5Z" fill="url(#edge)" stroke="#e6e6e6" />
        <path d="M20 85h120v51H20zM21 143h120v266H21z" fill="#e1e1df" />
        <path d="M70.500 0V517H140" stroke="#d3d3d3" strokeDasharray="1 2" />
        <path d="M0 27 14 0" stroke="#dedede" />
        <path d="M54 410Q60 490 75 568M88 410Q95 490 115 568" stroke="#e3e3e3" />
        <path d="M395 0h8q-3 3-6 0" fill="#222" />
        <text x="121" y="290" fontSize="42" fontStyle="italic" fontWeight="700" fontFamily="Liberation Serif, serif" fill="#e8e8e7">A</text>
      </svg>

      <div className="relative ml-[136px] mt-[3px] flex h-[561px] w-[894px] flex-col border-2 border-[#a5a5a5] bg-[#f0f0f0]">
        <div className="flex h-[20px] shrink-0 items-center bg-white pl-[5px] pr-[14px]">
          <svg width="14" height="14" viewBox="0 0 14 14" fill="none"><circle cx="6.500" cy="6.500" r="4.900" stroke="#5c9a35" strokeWidth="2.800" /><path d="M6 6h3.500L13 10v3.500h-2.500L6 9Z" fill="#e8a13a" /><path d="m8 8 5 5" stroke="#5c9a35" strokeWidth="1.600" /></svg>
          <span className="ml-[4px] grow text-[9.8px] tracking-[-0.25px] text-[#777]">*Untitled Project - QGIS</span>
          <svg width="85" height="10" viewBox="0 0 85 10" fill="none" stroke="#888"><path d="M1 5.500h8M76 1l8 8M84 1l-8 8" /><path d="M38.500 1.500h8v8h-8z" /></svg>
        </div>
        <div className="flex h-[18px] shrink-0 items-center border-b border-[#dcdcdc] pl-[7px] pt-[2px] text-[9.7px] tracking-[-0.1px] text-[#9a9a9a]">
          {menus.map(([u, r, pre], i) => <span key={i} className={"shrink-0 whitespace-nowrap " + menuW[i]}>{pre}<u>{u}</u>{r}</span>)}
        </div>
        <div className="flex h-[32px] shrink-0 items-center border-b border-[#bdbdbd] bg-gradient-to-b from-[#f9f9f9] to-[#efefef] pb-px">
          <Handle className="w-[9.5px]" />
          <Slots names={["newfile", "open", "save", "saveas", "layout", "layoutmgr", "style"]} />
          <Handle className="w-[14px] pl-[3px]" />
          <Slots names={["hand", "panmap", "zoomin", "zoomout", "zoom11", "zoomfull", "zoomsel", "zoomlayer", "zoomlast", "zoomnext", "book", "bookmark", "bookshow", "refresh"]} />
          <Handle className="w-[13.5px] pl-[3px]" />
          <Slots names={["identify", "gear"]} /><Caret light className="w-[9.5px]" />
          <Slots names={["select"]} /><Caret className="w-[10.5px]" />
          <Slots names={["selectval"]} /><Caret className="w-[10px]" />
          <Slots names={["deselect", "table", "abacus", "sigma"]} />
          <span className="ml-auto pr-[5px] text-[12px] font-bold leading-none">»</span>
        </div>
        <div className="flex h-[32px] shrink-0 items-center border-b border-[#c4c4c4] bg-gradient-to-b from-[#f9f9f9] to-[#efefef] pb-px">
          <Handle className="w-[9.5px]" />
          <Slots names={["datasrc", "geopkg", "vector", "feather", "chip"]} />
          <Handle className="w-[13px]" />
          <Slots names={["pencils", "pencil", "saveedit", "addpoly", "vertex"]} /><Caret light className="w-[10px]" />
          <Slots names={["multiedit", "trash", "cut", "copy", "paste", "undo", "redo"]} />
          <Handle className="w-[12.5px] pl-[3px]" />
          <Slots names={["label", "diagram", "pinlabel", "g1", "g2", "g3", "g4", "g5"]} />
          <Handle className="w-[16px]" /><Handle className="w-[13px]" />
          <Slots names={["python"]} /><Handle className="w-[13px]" />
          <Slots names={["help"]} /><Handle className="w-[16px]" />
        </div>
        <div className="flex h-[432px] shrink-0">
          <LeftDock />
          <div className="flex w-[4px] shrink-0 items-center"><div className="h-[16px] w-[3px] border-l border-dotted border-[#aaa]" /></div>
          <div className="w-[519px] shrink-0 border-b border-[#bcbcbc] bg-white pt-[67px] outline outline-1 outline-[#c0c0c0]"><WorldMap /></div>
          <div className="w-[6px] shrink-0" />
          <RightDock />
        </div>
        <StatusBar />
      </div>

      <div className="absolute left-[145px] top-[24px] h-[81px] w-[878px] border-[3px] border-[#ff0000]" />
      <div className="absolute left-[145px] top-[114px] h-[419px] w-[172px] border-[3px] border-[#ff0000]" />
      <div className="absolute left-[333px] top-[114px] h-[419px] w-[497px] border-[3px] border-[#ff0000]" />
      <div className="absolute left-[11px] top-[26px] whitespace-pre font-['Lato',sans-serif] text-[28px] leading-[37px] tracking-[0.4px] text-[#ff0000]">3. Menu/{"\n"}<span className="pl-[41px]">Tools</span></div>
      <div className="absolute left-[157px] top-[395px] whitespace-pre font-['Lato',sans-serif] text-[28px] leading-[37px] tracking-[0.4px] text-[#ff0000]">2. Table of{"\n"}<span className="pl-[29px] tracking-[0.2px]">Contents</span></div>
      <div className="absolute left-[494px] top-[472px] font-['Lato',sans-serif] text-[28px] leading-[37px] tracking-[0.35px] text-[#ff0000]">1. Workspace</div>
    </div>
  );
}
